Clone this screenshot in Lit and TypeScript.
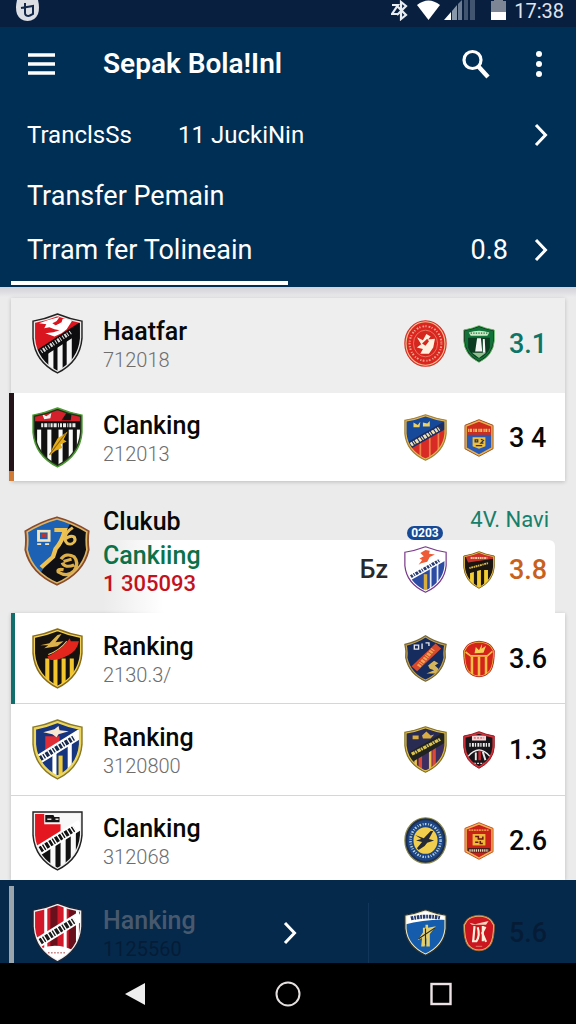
import { LitElement, html, svg, css, type SVGTemplateResult } from "lit";
import { customElement, property } from "lit/decorators.js";

/* Outlines, all on a 50 x 60 grid */
const SHIELD = "M25 1 Q37 6 49 8 V25 Q47 48 25 59 Q3 48 1 25 V8 Q13 6 25 1Z";
const FLAT = "M1 2 H49 V25 Q47 48 25 59 Q3 48 1 25Z";
const WIDE = "M25 1 Q36 9 49 12 Q47 20 48 29 Q44 50 25 59 Q6 50 2 29 Q3 20 1 12 Q14 9 25 1Z";
const BROAD = "M25 1 Q38 5 49 13 Q48 20 49 29 Q45 49 25 59 Q5 49 1 29 Q2 20 1 13 Q12 5 25 1Z";
const HEX = "M25 1 L47 10 V47 L25 59 L3 47 V10Z";
const ROUND = "M25 1 A24 29 0 0 1 25 59 A24 29 0 0 1 25 1Z";
const SOFT = "M25 2 Q38 3 44 9 L49 17 Q49 40 43 49 Q36 58 25 58 Q14 58 7 49 Q1 40 1 17 L6 9 Q12 3 25 2Z";

const stripes = (fill: string, xs: number[], w = 5, y = 0) =>
  xs.map((x) => svg`<rect x=${x} y=${y} width=${w} height="60" fill=${fill}/>`);

/* Diagonal sash with a row of small marks along it */
const sash = (fill: string, mark: string, w = 9, x1 = 3, y1 = 42, x2 = 48, y2 = 14) => svg`
  <path d="M${x1} ${y1} L${x2} ${y2}" stroke=${fill} stroke-width=${w}/>
  <path d="M${x1 + 5} ${y1 - 3} L${x2 - 6} ${y2 + 4}" stroke=${mark} stroke-width=${w - 4} stroke-dasharray="2.600 1.300 1.400 1.300 3.200 1.300"/>`;

const lower = (xs: number[], a: string, b: string, w = 5) => svg`
  <path d="M0 44 L50 13 V60 H0Z" fill=${a}/>
  <g clip-path="url(#low)">${stripes(b, xs, w)}</g>`;

interface Art { shape: string; edge: string; rim?: string; thin?: boolean; base: string; art: SVGTemplateResult }

const CRESTS: Record<string, Art> = {
  wolf: { shape: SHIELD, edge: "#222", rim: "#e9e9e9", thin: true, base: "#d9161f", art: svg`
    ${lower([16, 25, 34], "#0d0d10", "#f5f5f5", 5)}
    <path d="M3 43 L49 13" stroke="#0d0d10" stroke-width="9"/>
    <path d="M9 38 L38 19" stroke="#ddd" stroke-width="4" stroke-dasharray="1 1.400 2 1 1 2"/>
    <path d="M7 10 L16 7 L27 4 L24 8 L20 10 L23 12 L29 9 L30 6 L37 5 L39 8 L34 16 L29 20 L22 23 L13 20 L21 19 L27 17 L22 16 L17 14 L12 15 L14 11Z" fill="#fff"/>
    <path d="M23 9 L27 7 V10 L23 12Z" fill="#d9161f"/>` },
  feather: { shape: SHIELD, edge: "#4d9b35", rim: "#23301a", thin: true, base: "#111", art: svg`
    <rect width="50" height="15" fill="#d3202a"/><path d="M29 13 L35 4 H39 L38 13Z" fill="#18110f"/>
    <path d="M10 7 L14 9 L19 6 L18 11 L12 12Z" fill="#f2f2f2"/>
    ${stripes("#fafafa", [5, 15, 26, 36, 44], 4, 22)}
    <rect x="3" y="14" width="44" height="8" fill="#111"/><path d="M9 18 H43" stroke="#e9e9e9" stroke-width="4" stroke-dasharray="2 1 3 1.200 1 1"/>
    <path d="M35 24 L25 31 L21 38 L17 48 L23 43 L30 40 L28 37 L34 34 L31 32Z" fill="#e5ad18"/><path d="M33 26 L17 47" stroke="#8b5f0c"/>` },
  blackblue: { shape: BROAD, edge: "#8a4b2c", rim: "#dcb667", thin: true, base: "#101014", art: svg`
    <path d="M0 0 H38 L25 28 L13 48 L0 40Z" fill="#1c61b4"/>
    <path d="M23 12 H31 Q29 22 24 28 L22 35 L13 44" stroke="#edc253" stroke-width="3.400" fill="none"/>
    <rect x="11" y="13" width="8" height="8" fill="none" stroke="#f3e3bd" stroke-width="2.200"/><path d="M13 17 H17" stroke="#b33" stroke-width="3"/><path d="M10 24 H13 M16 24 H19" stroke="#f3e3bd" stroke-width="1.500"/>
    <path d="M37 10 Q31 14 31 20 Q32 25 36 24 Q40 22 38 18 Q35 16 31 20" stroke="#e7bd55" stroke-width="2.400" fill="none"/>
    <path d="M28 37 Q32 31 38 35 Q42 40 38 47 Q33 53 26 48 Q25 45 30 46 M38 42 Q31 45 29 40 M30 39 L36 37" stroke="#dcae49" stroke-width="2.600" fill="none"/>` },
  tiger: { shape: SHIELD, edge: "#8a6b1a", rim: "#f0cf55", thin: true, base: "#15120f", art: svg`
    ${stripes("#f2c62c", [13, 21, 29, 37], 4, 30)}
    <path d="M8 17 L17 15 L25 7 L29 6 L23 14 L31 13 L25 18 L12 20 L16 17Z" fill="#dcb34c"/>
    <path d="M15 28 Q26 23 34 14 L37 10 L38 13 L46 13 Q44 23 35 27 Q23 33 17 31Z" fill="#e3261d"/>
    <path d="M16 26 Q27 22 34 13" stroke="#f4d36b" fill="none"/>` },
  cross: { shape: SHIELD, edge: "#8c7a2b", rim: "#edd65e", base: "#17347f", art: svg`
    <path d="M13 17 H27 V29 L13 38Z" fill="#e12c35"/>
    ${lower([20, 35], "#173680", "#fff", 4)}<rect x="26" y="36" width="4" height="20" fill="#f2cd3a"/>
    ${sash("#fff", "#17294d", 9)}
    <path d="M11 13 L22 10 L26 7 L27 11 L36 12 L26 15 L24 18 L20 15Z" fill="#f8e8d3"/>` },
  redblack: { shape: FLAT, edge: "#222", rim: "#eee", thin: true, base: "#e4161f", art: svg`
    <path d="M28 0 H50 V20 L28 30Z" fill="#f8f8f8"/><path d="M12 0 H30 V14 H12Z" fill="#f8f8f8"/>${lower([18, 28, 38], "#111", "#fafafa", 5)}
    ${sash("#fff", "#111", 10)}
    <path d="M13 5 H21 L22 7 H27 V12 H13Z" fill="#151515"/><path d="M15 9 H19 M23 9 H26" stroke="#e8d9d9" stroke-width="1.500"/>` },
  redwhite: { shape: SHIELD, edge: "#1a2638", rim: "#f1f1f1", thin: true, base: "#d3182a", art: svg`
    ${stripes("#fff", [12, 31, 43], 3)}${stripes("#68101b", [18, 36], 7)}
    <path d="M8 46 Q24 39 42 48 L25 60Z" fill="#fff"/>
    ${sash("#fff", "#1b1b1b", 10)}<path d="M16 50 H34" stroke="#a33" stroke-width="1.500" stroke-dasharray="1 2"/>` },
  redround: { shape: ROUND, edge: "#d2362e", rim: "#f3bf8e", thin: true, base: "#dc251e", art: svg`
    <ellipse cx="25" cy="30" rx="18.500" ry="22" fill="none" stroke="#f0a48d" stroke-width="2.400" stroke-dasharray="1.400 2.400 2 1.500"/>
    <ellipse cx="25" cy="30" rx="14" ry="17" fill="#d6271f" stroke="#ef9c83" stroke-width=".8"/>
    <path d="M15 22 L22 26 L26 18 L31 21 L28 25 L36 24 L34 35 L29 43 L19 43 L22 37 L15 35 L20 31Z" fill="#fff0df"/><path d="M21 30 L27 24 L29 27 L25 33Z" fill="#d6271f"/>` },
  green: { shape: SHIELD, edge: "#6bc16d", rim: "#15361c", thin: true, base: "#12733a", art: svg`
    <path d="M9 12 Q25 6 41 12 L38 17 H12Z" fill="#c9e9c4"/><path d="M12 13 H38" stroke="#12733a" stroke-width="2" stroke-dasharray="2 2"/>
    <path d="M8 20 H42 V36 Q38 48 25 53 Q12 48 8 36Z" fill="#0c3b22"/>
    <path d="M22 21 H28 L30 42 H19Z M31 22 H34 L35 44 H31Z" fill="#f5f5f5"/><path d="M14 44 H36 L25 52Z" fill="#8fc08d"/>` },
  bluered: { shape: SHIELD, edge: "#a8833c", rim: "#e4b952", thin: true, base: "#17499a", art: svg`
    ${lower([18, 29, 39], "#d92b26", "#f08148", 2)}${sash("#1d2f62", "#f1e4b2", 9)}
    <path d="M11 11 L16 14 L19 10 L18 17 H11Z M22 11 L27 12 L30 9 L30 16 H22Z" fill="#edd065"/>` },
  hexblue: { shape: HEX, edge: "#a4521f", rim: "#e7b252", base: "#2759b5", art: svg`
    <path d="M0 0 H50 V25 H0Z" fill="#ce2c1c"/><path d="M8 18 H42" stroke="#f2bd62" stroke-width="5" stroke-dasharray="2 1 3 2"/>
    <path d="M15 29 H35 V43 L25 47 L15 43Z" fill="#f0c03c"/><path d="M19 33 H23 V36 H19Z M28 32 L32 34 L28 38 H32 M20 42 H30" stroke="#27315b" stroke-width="2" fill="none"/>` },
  whiteblue: { shape: SHIELD, edge: "#7a3a8a", rim: "#fff", thin: true, base: "#fff", art: svg`
    <path d="M17 24 L21 18 L18 16 L23 13 L19 9 L25 5 L30 6 L29 10 L36 11 L30 14 L27 20 L20 22Z" fill="#ed5a35"/>
    ${lower([30, 38], "#2c4ba3", "#e7edf9", 2)}<rect x="23" y="36" width="4" height="22" fill="#d9ad3c"/>${sash("#fff", "#26386e", 8)}` },
  gold: { shape: SHIELD, edge: "#8b6820", rim: "#ecc64b", thin: true, base: "#1a1510", art: svg`
    <path d="M0 0 H50 V12 L8 18Z" fill="#c8322b"/><path d="M12 11 H38" stroke="#f4c99e" stroke-width="3" stroke-dasharray="3 1 2 1"/>
    ${stripes("#f1cd31", [11, 22, 33], 6, 30)}<path d="M2 32 L48 18" stroke="#1a1510" stroke-width="11"/><path d="M10 27 L40 19" stroke="#d9b94a" stroke-width="3" stroke-dasharray="2 1 3 1"/>` },
  navy: { shape: WIDE, edge: "#7b6a34", rim: "#c3a256", thin: true, base: "#162b5e", art: svg`
    ${sash("#d94a2d", "#f0a451", 9, 12, 43, 40, 14)}
    <path d="M12 13 H17 V18 H12Z M21 11 V18 M25 10 H29 V14" stroke="#e5e6ea" stroke-width="1.600" fill="none"/>
    <path d="M28 39 L35 33 L40 36 L36 39 L40 43 L38 49 L26 49 L35 45 L30 43Z" fill="#d4b55c"/>` },
  redgold: { shape: SOFT, edge: "#b32a1c", rim: "#edb43c", thin: true, base: "#d3231b", art: svg`
    ${stripes("#f4bd45", [12, 23, 34], 4, 26)}<path d="M4 19 L12 25 H38 L46 18" stroke="#f4bd45" stroke-width="2.600" fill="none"/>
    <path d="M18 21 L20 11 L25 16 L30 6 L29 14 L36 9 L32 20Z" fill="#f5ce53"/>` },
  dusk: { shape: SHIELD, edge: "#8a7526", rim: "#dfbf49", thin: true, base: "#2a2b52", art: svg`
    ${lower([12, 29], "#3c2e60", "#ecc34a", 3)}<g clip-path="url(#low)">${stripes("#dd4736", [17, 33], 4)}</g>
    <path d="M3 43 L48 14" stroke="#20231f" stroke-width="12"/><path d="M9 36 L42 17" stroke="#dcc34f" stroke-width="4" stroke-dasharray="4 .8 2 1"/>
    <path d="M10 12 H17 V17 H10Z M21 12 L26 7 L31 12 L35 11 L31 16 H22Z" fill="#d9ab44"/>` },
  arch: { shape: SHIELD, edge: "#9b1c24", rim: "#d3333b", base: "#16161a", art: svg`
    <path d="M14 7 H36 V15 H14Z" fill="#f6d8da"/><path d="M17 11 H33" stroke="#d3333b" stroke-width="1.500" stroke-dasharray="3 2"/>
    <path d="M10 22 H42" stroke="#eee" stroke-width="6" stroke-dasharray="2 2 3 1.500"/>
    <path d="M8 40 Q25 20 42 40" stroke="#eee" stroke-width="2" fill="none"/><path d="M20 34 V46 M31 33 L35 46" stroke="#e8e8e8" stroke-width="3"/><path d="M26 31 V46" stroke="#c42831" stroke-width="4"/><path d="M17 51 H33" stroke="#ddd" stroke-width="2" stroke-dasharray="3 2"/>` },
  ball: { shape: ROUND, edge: "#8c8b4d", rim: "#1f2e4d", base: "#1c4586", art: svg`
    <ellipse cx="25" cy="30" rx="17.500" ry="21" fill="none" stroke="#bcd2d4" stroke-width="3" stroke-dasharray="1.800 2 1 1.600"/>
    <ellipse cx="25" cy="30" rx="14" ry="17" fill="#f1ce4d"/>
    <path d="M13 23 L23 27 L31 18 L34 18 L29 28 L35 30 L27 33 L24 37 L17 42 L15 40 L21 32 L14 30 L20 28Z" fill="#262a34"/>` },
  hexred: { shape: HEX, edge: "#c9531f", rim: "#efb257", base: "#c92018", art: svg`
    <path d="M9 13 H41" stroke="#f0b453" stroke-width="2" stroke-dasharray="3 1"/>
    <rect x="15" y="19" width="20" height="18" fill="#efb83d"/><path d="M19 23 H24 V27 H31 V23 M19 32 H24 M27 30 V34 H31" stroke="#6a1512" stroke-width="2.400" fill="none"/>
    <path d="M8 41 H42 V48 H8Z" fill="#45201b"/><path d="M10 45 H40" stroke="#ead9c0" stroke-width="4" stroke-dasharray="2 1.300"/>` },
  statue: { shape: SHIELD, edge: "#2c3336", rim: "#eee8bd", thin: true, base: "#155dac", art: svg`
    <path d="M0 0 H50 V14 Q25 13 0 20Z" fill="#fff"/><path d="M8 12 Q25 8 42 11" stroke="#243a6b" stroke-width="5" fill="none" stroke-dasharray="3 1 2 1"/>
    <path d="M22 24 H25 V20 H28 V24 L37 22 L30 32 V48 H26 V36 L24 48 H20 L21 37 L16 40 L22 30Z" fill="#e4cd6b"/><path d="M17 38 L36 24 M25 25 V45" stroke="#262a25" stroke-width="1.300"/>` },
  emblem: { shape: SOFT, edge: "#a6702f", rim: "#e6b878", thin: true, base: "#cb1620", art: svg`
    <path d="M10 14 L19 16 L28 14 L40 11 L36 17 H14Z" fill="#f7d5bc"/>
    <path d="M18 19 L16 42 M14 43 H21 Q27 34 23 21 M31 19 V43 M35 20 L30 30 L36 44" stroke="#fff0db" stroke-width="3.400" fill="none"/><path d="M20 51 H30" stroke="#efb08e"/>` },
};

@customElement("team-crest")
class TeamCrest extends LitElement {
  @property() name = "wolf";
  static styles = css`:host { display: block; } svg { display: block; width: 100%; height: 100%; }`;
  render() {
    const c = CRESTS[this.name];
    return html`<svg viewBox="0 0 50 60" preserveAspectRatio="none" aria-hidden="true">
      <defs><clipPath id="shape"><path d=${c.shape}/></clipPath><clipPath id="low"><path d="M0 44 L50 13 V60 H0Z"/></clipPath></defs>
      <g clip-path="url(#shape)"><rect width="50" height="60" fill=${c.base}/>${c.art}
        <path d=${c.shape} fill="none" stroke=${c.rim ?? c.edge} stroke-width=${c.thin ? 4 : 6}/></g>
      <path d=${c.shape} fill="none" stroke=${c.edge} stroke-width="1.400"/></svg>`;
  }
}

interface Team { name: string; code: string; crest: string; a: string; b: string; score: string; kind: string }
const FIRST: Team[] = [
  { name: "Haatfar", code: "712018", crest: "wolf", a: "redround", b: "green", score: "3.1", kind: "muted" },
  { name: "Clanking", code: "212013", crest: "feather", a: "bluered", b: "hexblue", score: "3 4", kind: "marked" },
];
const SECOND: Team[] = [
  { name: "Ranking", code: "2130.3/", crest: "tiger", a: "navy", b: "redgold", score: "3.6", kind: "teal" },
  { name: "Ranking", code: "3120800", crest: "cross", a: "dusk", b: "arch", score: "1.3", kind: "" },
  { name: "Clanking", code: "312068", crest: "redblack", a: "ball", b: "hexred", score: "2.6", kind: "last" },
];

const chevron = html`<svg class="chevron" viewBox="0 0 14 24" aria-hidden="true"><path d="M2 2 L11.500 12 L2 22" fill="none" stroke="currentColor" stroke-width="3"/></svg>`;

@customElement("app-root")
class AppRoot extends LitElement {
  static styles = css`
    :host { display: flex; flex-direction: column; min-height: 100vh; background: #ebebec; color: #080808; font-family: Roboto, "Liberation Sans", sans-serif; }
    * { box-sizing: border-box; }
    h1, h2, p, ul { margin: 0; padding: 0; font-weight: 400; }
    ul { list-style: none; }
    button { border: 0; padding: 0; background: none; color: inherit; font: inherit; cursor: pointer; }
    svg { display: block; }
    .status { display: flex; align-items: flex-start; height: 27px; padding: 0 12px 0 16px; background: #081f40; color: #dfe5ec; font-size: 20px; line-height: 22px; }
    .status .app { margin-right: auto; }
    .bt { margin-right: 9px; }
    .wifi { margin-right: 4px; }
    .signal { margin-right: 16px; }
    .battery { margin-right: 8px; }
    .head { background: #002f55; color: #fff; }
    .bar { display: flex; align-items: center; height: 74px; padding: 0 28px; }
    .bar h1 { flex: 1; padding-left: 48px; font-size: 28px; line-height: 36px; font-weight: 600; }
    .bar .find { margin-right: 40px; }
    .line { display: flex; align-items: center; width: 100%; height: 54px; padding: 0 28px 0 27px; font-size: 27px; line-height: 32px; text-align: left; }
    .line.small { height: 68px; font-size: 24px; }
    .line .label { width: 151px; }
    .line .grow { flex: 1; }
    .line .num { margin-right: 26px; }
    .chevron { width: 14px; height: 24px; }
    .underline { width: 50%; padding: 4px 0 2px 11px; }
    .underline span { display: block; height: 4px; background: #fff; }
    .list { flex: 1; padding: 11px 11px 0; background: linear-gradient(#d2d2d8, #ebebec 10px); }
    .card { box-shadow: 0 1px 4px #0003; }
    .row { display: grid; grid-template-columns: 92px 1fr 64px 44px 64px; align-items: center; padding: 15px 0; background: #fff; }
    .row.muted { padding: 15px 0 19px; background: #eee; }
    .row.marked { margin-left: -2px; padding: 14px 0 13px 2px; background: linear-gradient(#24141a 78px, #d07a35 78px) left / 5px 100% no-repeat #fff; }
    .row.teal { box-shadow: inset 4px 0 #126e6c, inset 0 -1px #d6d6d6; }
    .row.last { padding-bottom: 9px; box-shadow: inset 0 1px #d6d6d6; }
    .big { justify-self: center; width: 51px; height: 61px; }
    .mid { justify-self: center; width: 43px; height: 47px; }
    .small-crest { justify-self: center; width: 32px; height: 38px; }
    .name { font-size: 25px; line-height: 32px; font-weight: 500; }
    .code { font-size: 20px; line-height: 24px; color: #6d6d6d; font-weight: 300; }
    .score { padding-left: 8px; font-size: 27px; line-height: 32px; font-weight: 500; }
    .muted .score { color: #0c7568; }
    .group { display: grid; grid-template-columns: 92px 1fr; }
    .group .huge { align-self: center; justify-self: center; width: 66px; height: 70px; margin-top: 8px; }
    .top { display: grid; grid-template-columns: 1fr 64px 108px; align-items: end; height: 59px; }
    .top .name { line-height: 36px; }
    .pill { justify-self: center; width: 36px; border-radius: 8px; background: #174a96; color: #fff; font-size: 12px; line-height: 14px; font-weight: 700; text-align: center; }
    .navi { padding: 0 16px 8px 0; color: #16806a; font-size: 22px; line-height: 24px; text-align: right; white-space: nowrap; }
    .panel { display: grid; grid-template-columns: 1fr auto 64px 44px 54px; align-items: center; margin-right: 10px; padding-bottom: 14px; height: 73px; border-radius: 0 6px 0 0; background: linear-gradient(to right, #fff0, #fff 60px); }
    .panel .name { line-height: 28px; color: #0b7149; }
    .panel .warn { color: #c4121c; font-size: 22px; line-height: 28px; font-weight: 500; }
    .tag { padding-right: 5px; font-size: 25px; line-height: 32px; font-weight: 500; color: #29292c; }
    .panel .score { color: #c7611d; }
    .dock { padding: 6px 11px 0; background: #05294b; }
    .dock .row { margin-left: -2px; padding: 16px 0 0 2px; background: linear-gradient(#9ba3ab, #9ba3ab) left / 5px 100% no-repeat; }
    .dock .middle { display: flex; align-items: center; }
    .dock .text { width: 180px; }
    .dock .name { color: #49596d; }
    .dock .code, .dock .score { color: #061c36; }
    .dock .code { font-weight: 400; }
    .rule { width: 1px; height: 60px; margin-left: auto; margin-right: 24px; background: #12365a; }
    .dock .chevron { color: #fff; }
    .keys { display: grid; grid-template-columns: repeat(3, 1fr); place-items: center; height: 61px; padding: 0 58px; background: #000; }
  `;

  private row(t: Team) {
    return html`<li class="row ${t.kind}">
      <team-crest class="big" name=${t.crest}></team-crest>
      <div><h2 class="name">${t.name}</h2><p class="code">${t.code}</p></div>
      <team-crest class="mid" name=${t.a}></team-crest>
      <team-crest class="small-crest" name=${t.b}></team-crest>
      <span class="score">${t.score}</span></li>`;
  }

  render() {
    return html`
      <div class="status">
        <svg class="app" width="23" height="22" viewBox="0 0 23 22" aria-hidden="true"><path d="M1 0 H22 Q24 8 22 14 Q19 21 11.500 21 Q4 21 1 14 Q-1 8 1 0Z" fill="#dcdfe4"/><path d="M5 8 L17 6 V14 L13 16 M9 3 V13 Q9 16 13 16" fill="none" stroke="#14294a" stroke-width="2"/></svg>
        <svg class="bt" width="17" height="21" viewBox="0 0 17 21" aria-hidden="true"><path d="M1 5 H7 L1 14 H7 M5 5 L15 15 L10 19 V2 L15 6 L6 15" fill="none" stroke="#e8edf2" stroke-width="2.200"/></svg>
        <svg class="wifi" width="23" height="21" viewBox="0 0 23 21" aria-hidden="true"><path d="M0 5 Q11.500 -4 23 5 L11.500 20Z" fill="#fff"/></svg>
        <svg class="signal" width="31" height="21" viewBox="0 0 31 21" aria-hidden="true"><path d="M0 20 L7 12 V20Z" fill="#fff"/><path d="M8 11 L13 5 V20 H8Z" fill="#8997aa"/><path d="M14 4 L18 0 V20 H14Z" fill="#6d7d94"/><path d="M20 0 H24 V20 H20Z M26 0 H31 V20 H26Z" fill="#415571"/></svg>
        <svg class="battery" width="15" height="21" viewBox="0 0 15 21" aria-hidden="true"><path d="M0 1 H3 V0 H12 V1 H15 V20 H0Z" fill="#7d8694"/><path d="M0 12 H15 V20 H0Z" fill="#fff"/></svg>
        <span>17:38</span>
      </div>
      <header class="head">
        <div class="bar">
          <button aria-label="Menu"><svg width="27" height="22" viewBox="0 0 27 22"><path d="M0 2 H27 M0 11 H27 M0 20 H27" stroke="#fff" stroke-width="3.600"/></svg></button>
          <h1>Sepak Bola!Inl</h1>
          <button class="find" aria-label="Search"><svg width="28" height="30" viewBox="0 0 28 30"><circle cx="10.500" cy="11" r="8.500" fill="none" stroke="#fff" stroke-width="3.200"/><path d="M16 17 L26 28" stroke="#fff" stroke-width="4.400"/></svg></button>
          <button aria-label="More"><svg width="18" height="28" viewBox="0 0 18 28"><g fill="#fff"><circle cx="9" cy="4" r="3"/><circle cx="9" cy="14" r="3"/><circle cx="9" cy="24" r="3"/></g></svg></button>
        </div>
        <button class="line small"><span class="label">TranclsSs</span><span class="grow">11 JuckiNin</span>${chevron}</button>
        <p class="line">Transfer Pemain</p>
        <button class="line"><span class="grow">Trram fer Tolineain</span><span class="num">0.8</span>${chevron}</button>
        <div class="underline"><span></span></div>
      </header>
      <main class="list">
        <ul class="card">${FIRST.map((t) => this.row(t))}</ul>
        <section class="group">
          <team-crest class="huge" name="blackblue"></team-crest>
          <div>
            <div class="top"><h2 class="name">Clukub</h2><span class="pill">0203</span><span class="navi">4V. Navi</span></div>
            <div class="panel">
              <div><p class="name">Cankiing</p><p class="warn">1 305093</p></div>
              <span class="tag">Бz</span>
              <team-crest class="mid" name="whiteblue"></team-crest>
              <team-crest class="small-crest" name="gold"></team-crest>
              <span class="score">3.8</span>
            </div>
          </div>
        </section>
        <ul class="card">${SECOND.map((t) => this.row(t))}</ul>
      </main>
      <footer>
        <div class="dock"><div class="row">
          <team-crest class="big" name="redwhite"></team-crest>
          <div class="middle"><div class="text"><h2 class="name">Hanking</h2><p class="code">1125560</p></div>${chevron}<span class="rule"></span></div>
          <team-crest class="mid" name="statue"></team-crest>
          <team-crest class="small-crest" name="emblem"></team-crest>
          <span class="score">5.6</span>
        </div></div>
        <nav class="keys">
          <button aria-label="Back"><svg width="22" height="24" viewBox="0 0 22 24"><path d="M1 12 L21 1 V23Z" fill="#eee"/></svg></button>
          <button aria-label="Home"><svg width="26" height="26" viewBox="0 0 26 26"><circle cx="13" cy="13" r="11.500" fill="none" stroke="#e5e0e0" stroke-width="2"/></svg></button>
          <button aria-label="Recents"><svg width="22" height="24" viewBox="0 0 22 24"><rect x="1.500" y="2" width="19" height="20" fill="none" stroke="#ece2e6" stroke-width="2.400"/></svg></button>
        </nav>
      </footer>`;
  }
}
